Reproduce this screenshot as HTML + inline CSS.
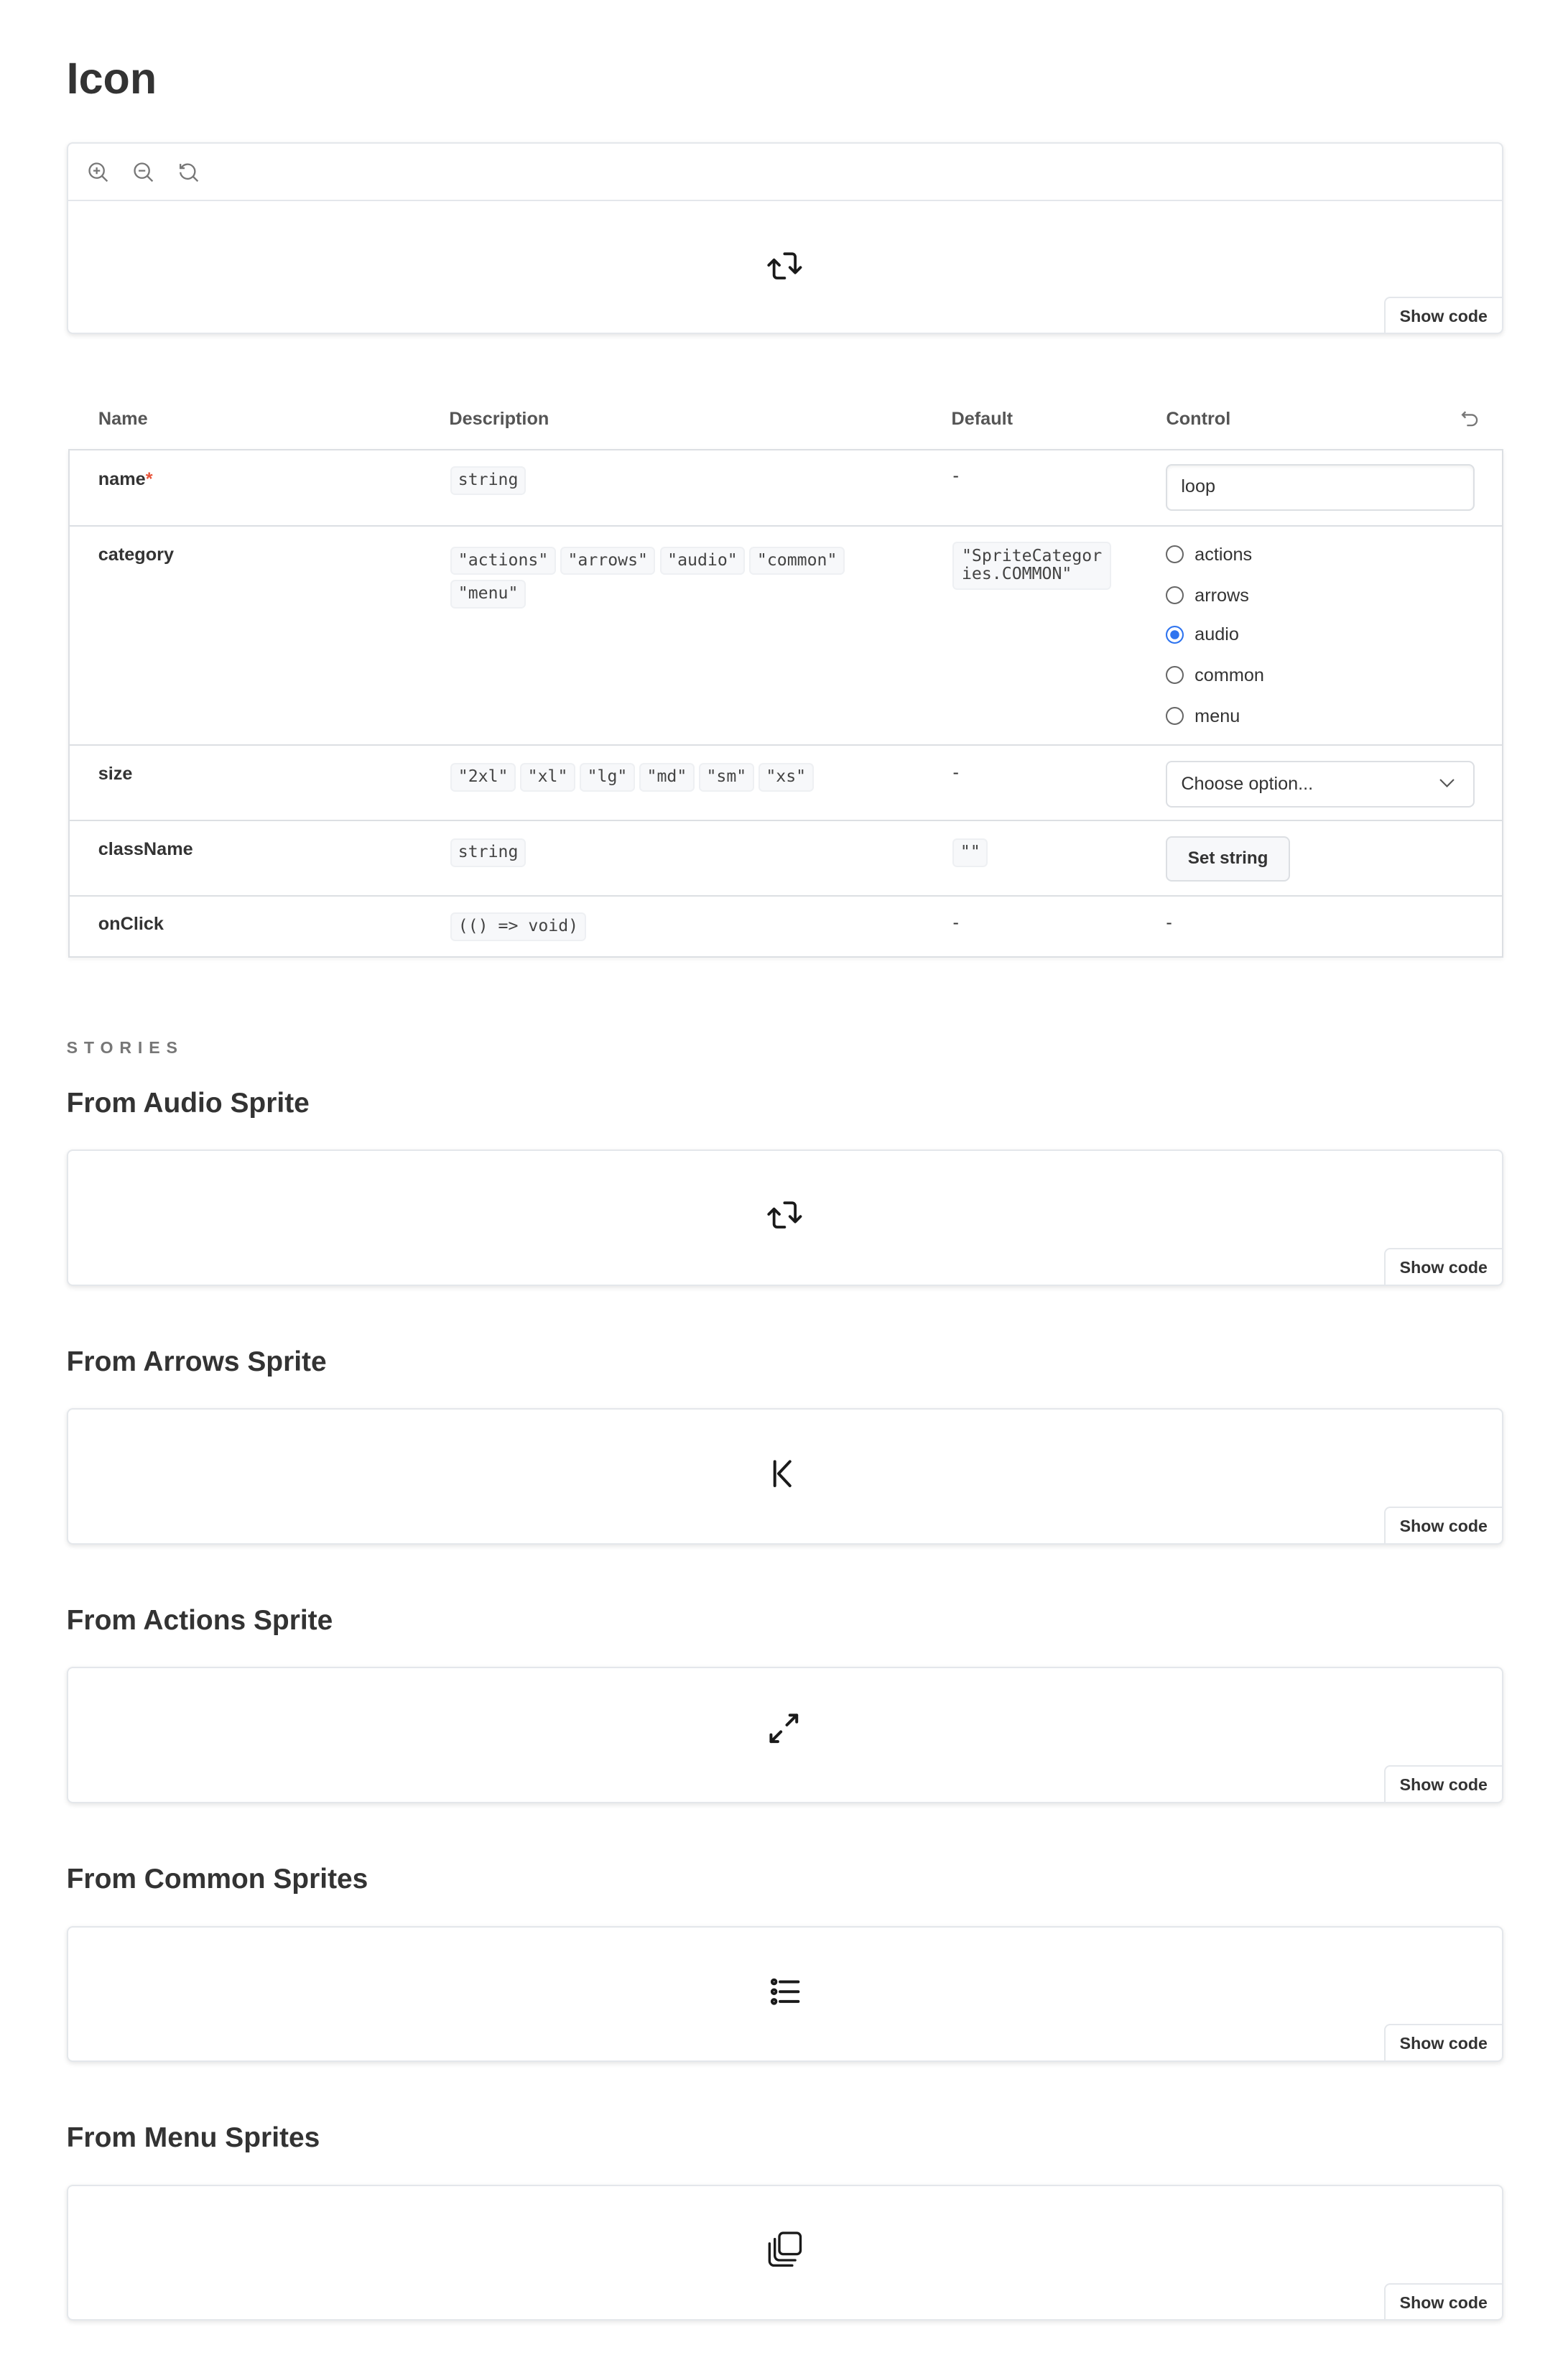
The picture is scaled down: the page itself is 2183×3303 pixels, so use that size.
<!DOCTYPE html>
<html><head><meta charset="utf-8"><style>
html,body{margin:0;padding:0;background:#fff}
body{width:2183px;height:3303px;overflow:hidden}
#p{zoom:2.1057;width:1036px;height:1568px;position:relative;font-family:"Liberation Sans",sans-serif;color:#333}
.a{position:absolute}
h1{position:absolute;left:44px;top:32px;margin:0;font-size:29px;font-weight:bold;color:#333;line-height:40px}
.box{position:absolute;left:44px;width:948px;border:1px solid #e4e7eb;border-radius:4px;box-shadow:0 1px 3px rgba(0,0,0,.10);background:#fff}
.sc{position:absolute;right:0;bottom:0;width:77px;height:23px;border:1px solid #e4e7eb;border-right:0;border-bottom:0;border-radius:4px 0 4px 0;font-size:11px;font-weight:bold;color:#333;text-align:center;line-height:24px;background:#fff}
.ic{position:absolute;left:461px;top:31px}
.th{position:absolute;top:270px;font-size:12px;font-weight:bold;color:#555}
.tb{position:absolute;left:45px;top:297px;width:947px;height:334px;border:1px solid #dcdfe3;box-shadow:0 1px 3px rgba(0,0,0,.06)}
.row{position:absolute;left:0;width:947px;border-top:1px solid #dcdfe3}
.nm{position:absolute;left:19px;font-size:12px;font-weight:bold;color:#333}
.c{display:inline-block;font-family:"DejaVu Sans Mono","Liberation Mono",monospace;font-size:11px;color:#444;background:#f7f8fa;border:1px solid #eef0f3;border-radius:3px;padding:1px 4px;line-height:15px;margin-right:3px}
.dash{position:absolute;font-size:12px;color:#333}
.rd{position:absolute;left:725px;font-size:12px;color:#333}
.rd i{display:inline-block;width:10px;height:10px;border:1.2px solid #666;border-radius:50%;vertical-align:-2px;margin-right:7px}
h2{position:absolute;left:44px;margin:0;font-size:18.5px;font-weight:bold;color:#333}
</style></head><body><div id="p">
<h1>Icon</h1>

<div class="box" style="top:94px;height:125px">
 <div class="a" style="left:0;top:37px;width:948px;border-top:1px solid #e4e7eb"></div>
 <svg class="a" style="left:13px;top:12px" width="14" height="14" viewBox="0 0 14 14" fill="none" stroke="#777" stroke-width="1.1"><circle cx="6" cy="6" r="4.8"/><path d="M9.5 9.5L13 13M6 3.8v4.4M3.8 6h4.4"/></svg>
 <svg class="a" style="left:43px;top:12px" width="14" height="14" viewBox="0 0 14 14" fill="none" stroke="#777" stroke-width="1.1"><circle cx="6" cy="6" r="4.8"/><path d="M9.5 9.5L13 13M3.8 6h4.4"/></svg>
 <svg class="a" style="left:73px;top:12px" width="14" height="14" viewBox="0 0 14 14" fill="none" stroke="#777" stroke-width="1.1"><path d="M2.2 4A4.8 4.8 0 1 1 1.5 7"/><path d="M1.5 1.5V4.3H4.3M9.5 9.5L13 13"/></svg>
 <svg class="ic" style="top:70px" width="26" height="22" viewBox="0 0 26 22" fill="none" stroke="#1a1a1a" stroke-width="1.8" stroke-linecap="round" stroke-linejoin="round"><path d="M13 3h5a2 2 0 0 1 2 2v10M16.5 12l3.5 3.5 3.5-3.5M13 19H8a2 2 0 0 1-2-2V7M2.5 10.5L6 7l3.5 3.5"/></svg>
 <div class="sc">Show code</div>
</div>

<div class="th" style="left:65px">Name</div>
<div class="th" style="left:297px">Description</div>
<div class="th" style="left:629px">Default</div>
<div class="th" style="left:771px">Control</div>
<svg class="a" style="left:966px;top:270px" width="12" height="13" viewBox="0 0 12 13" fill="none" stroke="#777" stroke-width="1.1"><path d="M3 2L1 4l2 2M1 4h6a3.5 3.5 0 0 1 0 7H4"/></svg>

<div class="tb">
 <div class="row" style="top:-1px;height:50px;border-top:0">
  <div class="nm" style="top:13px">name<span style="color:#e8543a">*</span></div>
  <div class="a" style="left:252px;top:10px"><span class="c">string</span></div>
  <div class="dash" style="left:584px;top:11px">-</div>
  <div class="a" style="left:725px;top:10px;width:202px;height:29px;border:1px solid #dcdfe3;border-radius:4px;box-shadow:inset 0 1px 2px rgba(0,0,0,.06);font-size:12px;line-height:28px;text-indent:9px">loop</div>
 </div>
 <div class="row" style="top:49px;height:145px">
  <div class="nm" style="top:12px">category</div>
  <div class="a" style="left:252px;top:10px;width:300px;line-height:22px"><span class="c">"actions"</span><span class="c">"arrows"</span><span class="c">"audio"</span><span class="c">"common"</span><br><span class="c">"menu"</span></div>
  <div class="a" style="left:584px;top:10px"><span class="c" style="line-height:12px;padding:3px 5px">"SpriteCategor<br>ies.COMMON"</span></div>
  <div class="rd" style="top:12px"><i></i>actions</div>
  <div class="rd" style="top:39px"><i></i>arrows</div>
  <div class="rd" style="top:65px"><i style="border-color:#2f74ef;box-shadow:inset 0 0 0 2px #fff;background:#2f74ef"></i>audio</div>
  <div class="rd" style="top:92px"><i></i>common</div>
  <div class="rd" style="top:119px"><i></i>menu</div>
 </div>
 <div class="row" style="top:194px;height:50px">
  <div class="nm" style="top:12px">size</div>
  <div class="a" style="left:252px;top:10px"><span class="c">"2xl"</span><span class="c">"xl"</span><span class="c">"lg"</span><span class="c">"md"</span><span class="c">"sm"</span><span class="c">"xs"</span></div>
  <div class="dash" style="left:584px;top:11px">-</div>
  <div class="a" style="left:725px;top:10px;width:202px;height:29px;border:1px solid #dcdfe3;border-radius:4px;font-size:12px;line-height:29px;text-indent:9px">Choose option...<svg class="a" style="right:12px;top:11px" width="10" height="6" viewBox="0 0 10 6" fill="none" stroke="#555" stroke-width="1"><path d="M0.5 0.5L5 5 9.5 0.5"/></svg></div>
 </div>
 <div class="row" style="top:244px;height:50px">
  <div class="nm" style="top:12px">className</div>
  <div class="a" style="left:252px;top:10px"><span class="c">string</span></div>
  <div class="a" style="left:584px;top:10px"><span class="c">""</span></div>
  <div class="a" style="left:725px;top:10px;width:80px;height:28px;border:1px solid #dcdfe3;border-radius:4px;background:#f7f8fa;font-size:11.5px;font-weight:bold;line-height:28px;text-align:center">Set string</div>
 </div>
 <div class="row" style="top:294px;height:40px">
  <div class="nm" style="top:11px">onClick</div>
  <div class="a" style="left:252px;top:9px"><span class="c">(() =&gt; void)</span></div>
  <div class="dash" style="left:584px;top:10px">-</div>
  <div class="dash" style="left:725px;top:10px">-</div>
 </div>
</div>

<div class="a" style="left:44px;top:686px;font-size:11px;font-weight:bold;letter-spacing:4.2px;color:#777">STORIES</div>

<h2 style="top:719px">From Audio Sprite</h2>
<div class="box" style="top:760px;height:88px">
 <svg class="ic" style="top:31px" width="26" height="22" viewBox="0 0 26 22" fill="none" stroke="#1a1a1a" stroke-width="1.8" stroke-linecap="round" stroke-linejoin="round"><path d="M13 3h5a2 2 0 0 1 2 2v10M16.5 12l3.5 3.5 3.5-3.5M13 19H8a2 2 0 0 1-2-2V7M2.5 10.5L6 7l3.5 3.5"/></svg>
 <div class="sc">Show code</div>
</div>

<h2 style="top:890px">From Arrows Sprite</h2>
<div class="box" style="top:931px;height:88px">
 <svg class="ic" style="top:31px" width="26" height="22" viewBox="0 0 26 22" fill="none" stroke="#1a1a1a" stroke-width="1.9" stroke-linecap="round" stroke-linejoin="round"><path d="M6.5 3v16M16.5 3l-7.5 8 7.5 8"/></svg>
 <div class="sc">Show code</div>
</div>

<h2 style="top:1061px">From Actions Sprite</h2>
<div class="box" style="top:1102px;height:88px">
 <svg class="ic" style="top:28px" width="26" height="26" viewBox="0 0 26 26" fill="none" stroke="#1a1a1a" stroke-width="1.9" stroke-linecap="round" stroke-linejoin="round"><path d="M14.5 9.5L21 3M16.5 3H21v4.5M10.5 14L4 20.5M4 16v4.5h4.5"/></svg>
 <div class="sc">Show code</div>
</div>

<h2 style="top:1232px">From Common Sprites</h2>
<div class="box" style="top:1273px;height:88px">
 <svg class="ic" style="top:31px" width="26" height="22" viewBox="0 0 26 22" fill="none" stroke="#1a1a1a" stroke-width="1.9" stroke-linecap="round"><circle cx="6" cy="5" r="1.3"/><circle cx="6" cy="11.5" r="1.3"/><circle cx="6" cy="18" r="1.3"/><path d="M10 5h12M10 11.5h12M10 18h12"/></svg>
 <div class="sc">Show code</div>
</div>

<h2 style="top:1403px">From Menu Sprites</h2>
<div class="box" style="top:1444px;height:88px">
 <svg class="ic" style="top:30px" width="26" height="26" viewBox="0 0 26 26" fill="none" stroke="#1a1a1a" stroke-width="1.6" stroke-linecap="round"><rect x="9.5" y="1" width="14" height="14" rx="2.5"/><path d="M6.5 5v11a3 3 0 0 0 3 3H20M3 8v11.5a3 3 0 0 0 3 3h12"/></svg>
 <div class="sc">Show code</div>
</div>
</div></body></html>
